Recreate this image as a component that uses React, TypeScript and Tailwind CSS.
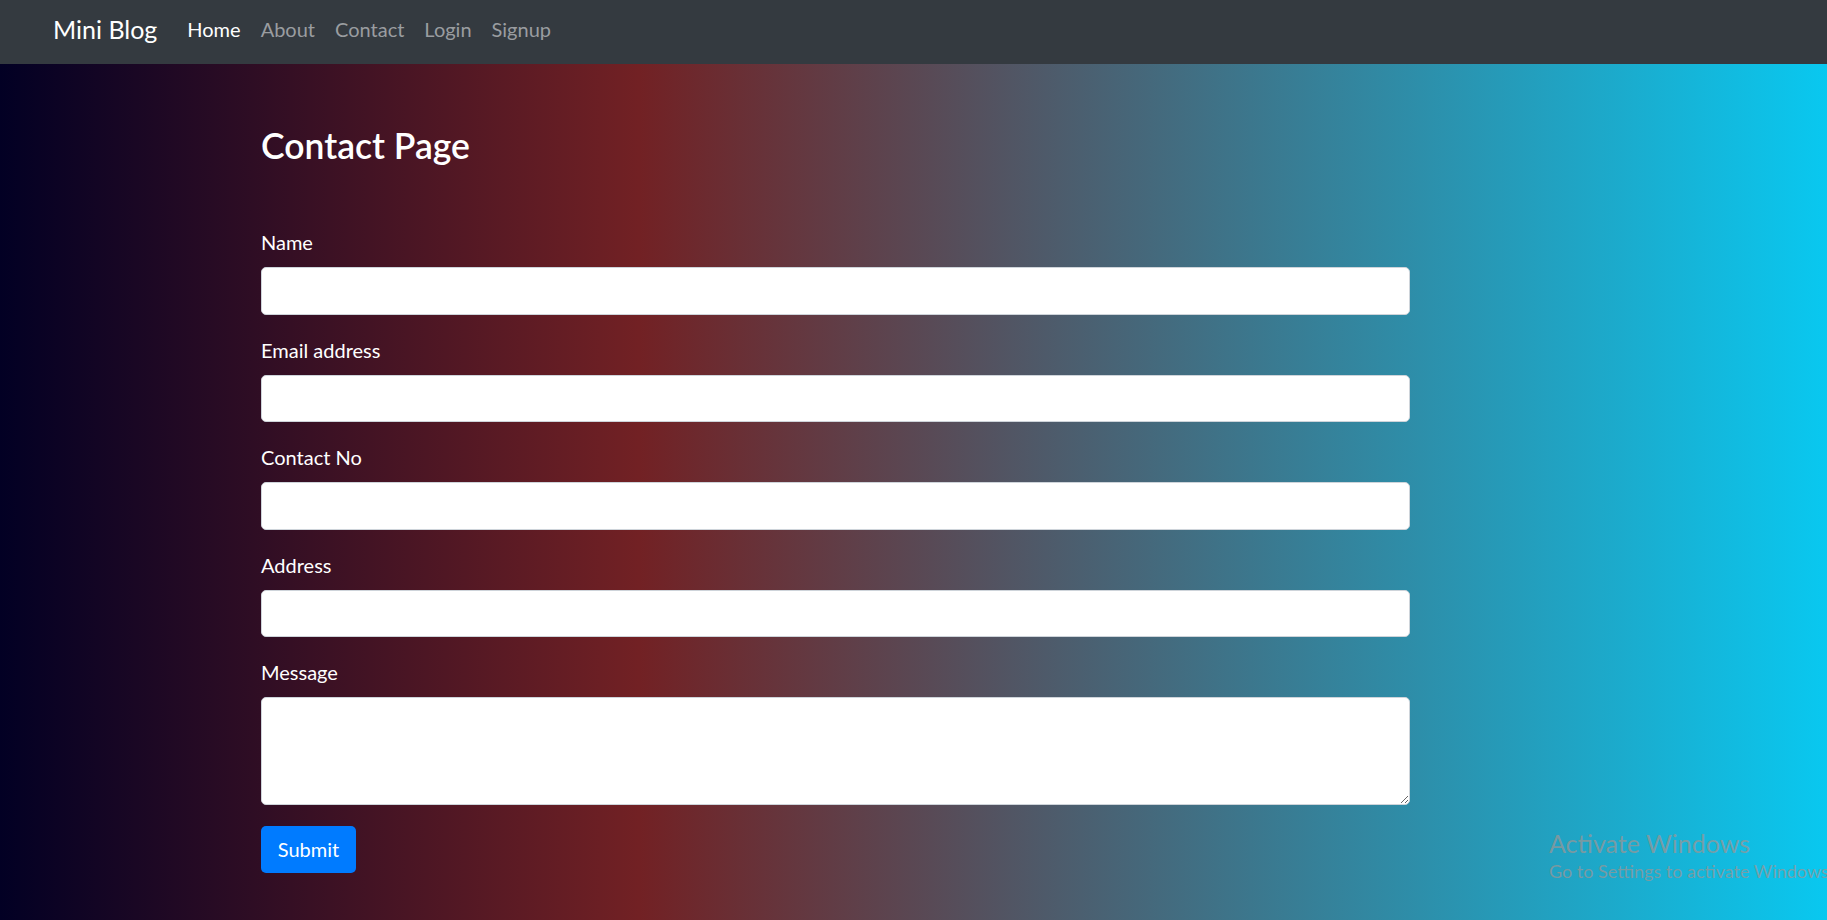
import React from "react";

const fields = [
  { label: "Name", type: "text" },
  { label: "Email address", type: "email" },
  { label: "Contact No", type: "text" },
  { label: "Address", type: "text" },
];

export default function App() {
  return (
    <div className="relative min-h-[920px] w-full overflow-hidden font-['Lato','Noto_Sans',sans-serif]">
      <nav className="flex h-[64px] items-center bg-[#343a40] pb-[6px] pl-[53px]">
        <span className="mr-[20px] text-[25px] leading-[38px] text-white">Mini Blog</span>
        <ul className="flex items-center text-[20px] leading-[30px]">
          <li className="px-[10px] text-white">Home</li>
          <li className="px-[10px] text-[#9a9da0]">About</li>
          <li className="px-[10px] text-[#9a9da0]">Contact</li>
          <li className="px-[10px] text-[#9a9da0]">Login</li>
          <li className="px-[10px] text-[#9a9da0]">Signup</li>
        </ul>
      </nav>
      <main className="min-h-[856px] bg-[linear-gradient(90deg,#020024_0%,#722124_35%,#09c8f0_100%)] pt-[61px]">
        <div className="ml-[261px] w-[1149px]">
          <h3 className="mb-[60px] text-[35.5px] font-semibold leading-[42px] text-white">Contact Page</h3>
          <form onSubmit={(e) => e.preventDefault()}>
            {fields.map((f) => (
              <div key={f.label} className="mb-[20px]">
                <label className="mb-[10px] block text-[20px] leading-[30px] text-white">{f.label}</label>
                <input
                  type={f.type}
                  className="block h-[47.5px] w-full rounded-[5px] border border-[#ced4da] bg-white px-[15px] text-[20px]"
                />
              </div>
            ))}
            <div className="mb-[20px]">
              <label className="mb-[10px] block text-[20px] leading-[30px] text-white">Message</label>
              <textarea
                rows={3}
                className="block h-[107.5px] w-full rounded-[5px] border border-[#ced4da] bg-white px-[15px] py-[7px] text-[20px]"
              />
            </div>
            <button
              type="submit"
              className="mt-[1px] h-[47.5px] w-[95px] rounded-[5px] bg-[#007bff] text-[20px] leading-[30px] text-white"
            >
              Submit
            </button>
          </form>
        </div>
      </main>
      <div className="pointer-events-none absolute left-[1549px] top-[827px] whitespace-nowrap text-[rgba(150,150,150,0.75)]">
        <div className="text-[25px] leading-[32px]">Activate Windows</div>
        <div className="text-[18px] leading-[24px]">Go to Settings to activate Windows.</div>
      </div>
    </div>
  );
}
